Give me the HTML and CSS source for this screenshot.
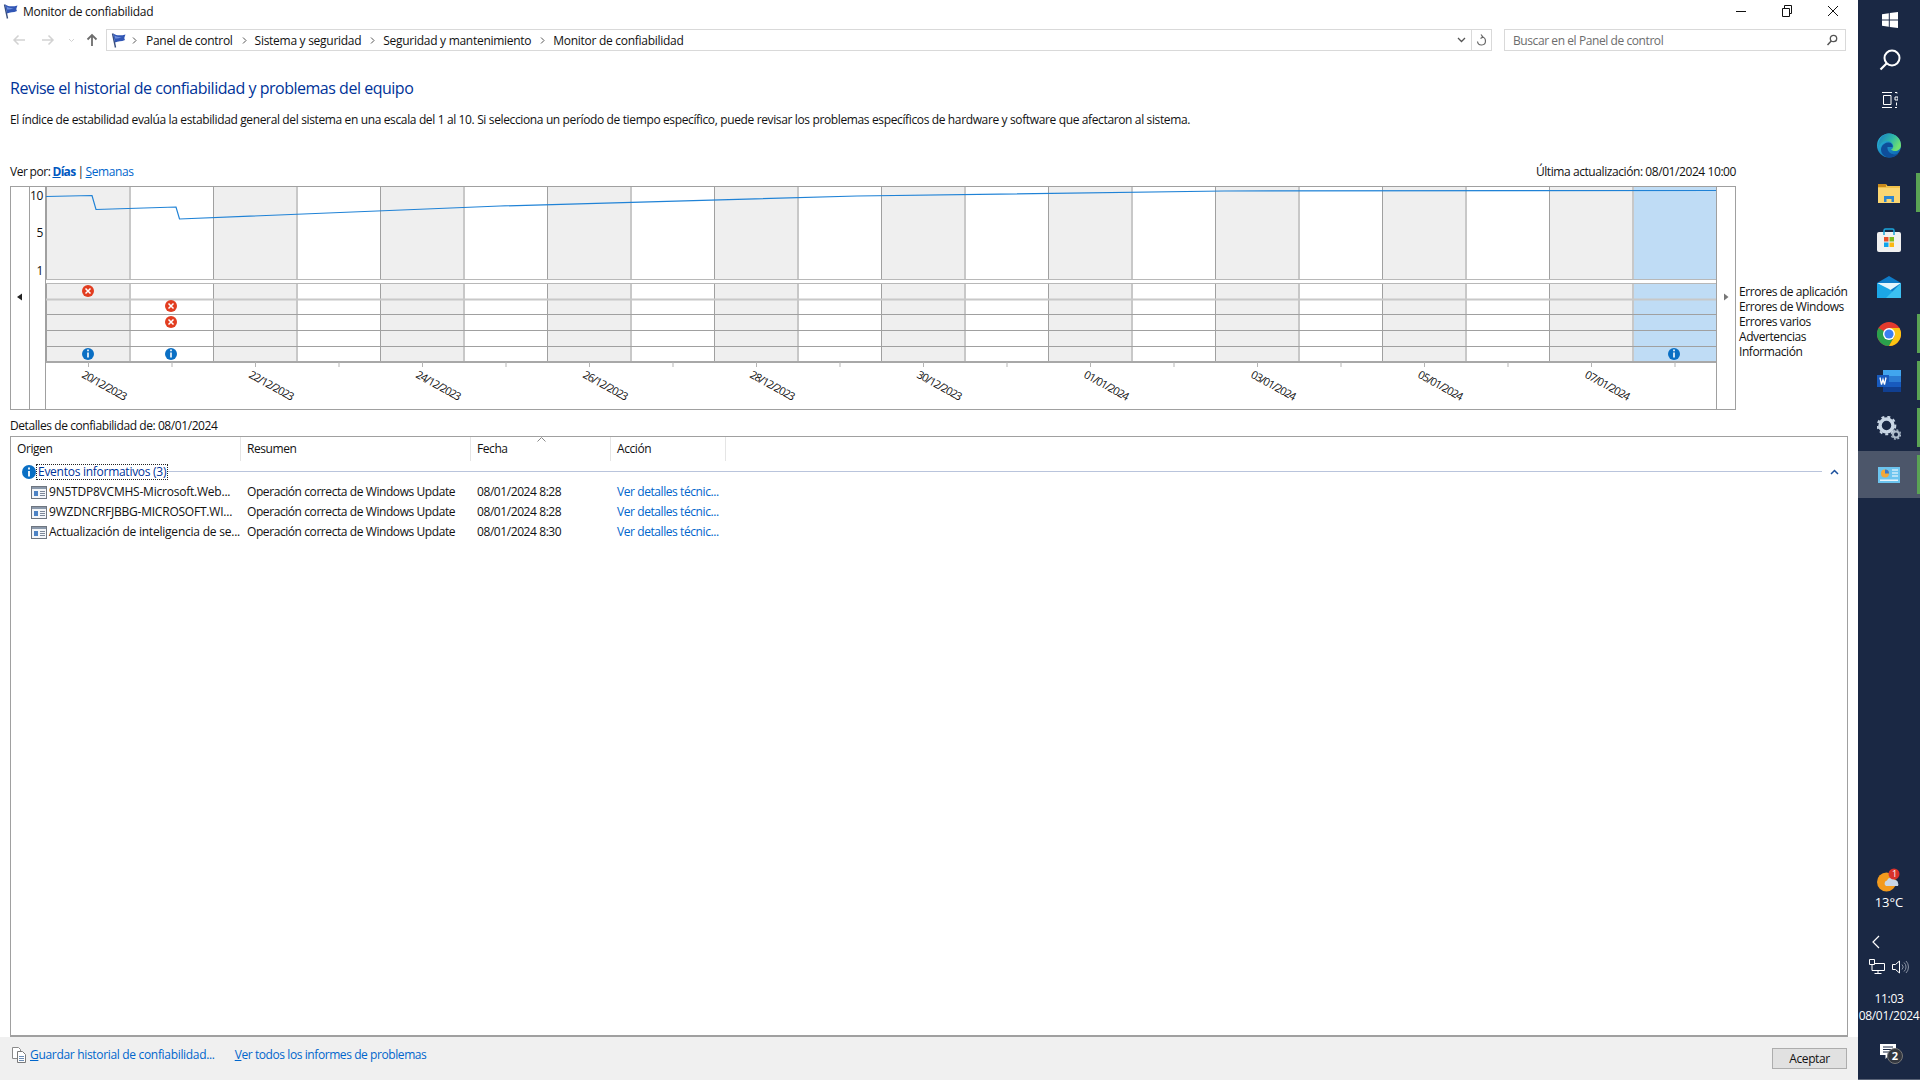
FILE: index.html
```html
<!DOCTYPE html>
<html lang="es">

<head>
    <meta charset="UTF-8">
    <title>Monitor de confiabilidad</title>
    <link rel="stylesheet" href="styles.css">
</head>

<body>
    <div class="window">
        <div class="titlebar">
            <svg class="flag" viewBox="0 0 16 16"><path d="M2.500 1.500L5.500 15.500" stroke="#3a4f7d" stroke-width="1.400" fill="none"/><path d="M3 1.500C6.500 3.500 10 4 15.500 2.500C14.500 5 13.800 6 15 8C11.500 10 8 8.800 5 10.500z" fill="#3156b5"/><path d="M4.500 3.500C7 5 9.500 5.500 12 5C10 6.500 7.500 6.500 5 6.500z" fill="#6f8fdc"/></svg>
            <span class="title-text">Monitor de confiabilidad</span>
            <div class="win-btns">
                <div class="win-btn"><svg width="12" height="12" viewBox="0 0 12 12"><path d="M1 6.500h10" stroke="#111" fill="none"/></svg></div>
                <div class="win-btn"><svg width="12" height="12" viewBox="0 0 12 12"><path d="M1.500 3.500h7v8h-7zM3.500 3.500v-3h7v8h-2" stroke="#111" fill="none"/></svg></div>
                <div class="win-btn"><svg width="12" height="12" viewBox="0 0 12 12"><path d="M1 1l10 10M11 1L1 11" stroke="#111" fill="none"/></svg></div>
            </div>
        </div>

        <div class="navbar">
            <div class="nav-arrows">
                <svg width="14" height="12" viewBox="0 0 14 12"><path d="M13 6H2M6.500 1.500L2 6l4.500 4.500" stroke="#d2d2d2" stroke-width="1.500" fill="none"/></svg>
                <svg class="nav-fwd" width="14" height="12" viewBox="0 0 14 12"><path d="M1 6h11M7.500 1.500L12 6l-4.500 4.500" stroke="#d2d2d2" stroke-width="1.500" fill="none"/></svg>
                <svg width="7" height="5" viewBox="0 0 7 5"><path d="M1 1l2.500 2.500L6 1" stroke="#d2d2d2" fill="none"/></svg>
                <svg class="nav-up" width="12" height="14" viewBox="0 0 12 14"><path d="M6 13V2M1.500 6.500L6 2l4.500 4.500" stroke="#6d6d6d" stroke-width="1.800" fill="none"/></svg>
            </div>
            <div class="address">
                <svg class="flag" viewBox="0 0 16 16"><path d="M2.500 1.500L5.500 15.500" stroke="#3a4f7d" stroke-width="1.400" fill="none"/><path d="M3 1.500C6.500 3.500 10 4 15.500 2.500C14.500 5 13.800 6 15 8C11.500 10 8 8.800 5 10.500z" fill="#3156b5"/><path d="M4.500 3.500C7 5 9.500 5.500 12 5C10 6.500 7.500 6.500 5 6.500z" fill="#6f8fdc"/></svg>
                <svg class="crumb-sep first-sep" viewBox="0 0 5 7"><path d="M1 .5l3 3-3 3" stroke="#555" fill="none"/></svg>
                <span>Panel de control</span>
                <svg class="crumb-sep" viewBox="0 0 5 7"><path d="M1 .5l3 3-3 3" stroke="#555" fill="none"/></svg>
                <span>Sistema y seguridad</span>
                <svg class="crumb-sep" viewBox="0 0 5 7"><path d="M1 .5l3 3-3 3" stroke="#555" fill="none"/></svg>
                <span>Seguridad y mantenimiento</span>
                <svg class="crumb-sep" viewBox="0 0 5 7"><path d="M1 .5l3 3-3 3" stroke="#555" fill="none"/></svg>
                <span>Monitor de confiabilidad</span>
                <div class="addr-end">
                    <svg width="9" height="6" viewBox="0 0 9 6"><path d="M1 1l3.500 3.500L8 1" stroke="#555" stroke-width="1.300" fill="none"/></svg>
                    <div class="refresh">
                        <svg width="11" height="13" viewBox="0 0 11 13"><path d="M5.500 3A4 4 0 1 1 1.500 7.500M5 .5l2 2.500-2.500 1.500" stroke="#666" stroke-width="1.200" fill="none"/></svg>
                    </div>
                </div>
            </div>
            <div class="search">
                <span>Buscar en el Panel de control</span>
                <svg width="12" height="12" viewBox="0 0 12 12"><circle cx="7.500" cy="4.500" r="3.200" stroke="#555" stroke-width="1.300" fill="none"/><path d="M5.200 7L1.500 11" stroke="#555" stroke-width="1.500"/></svg>
            </div>
        </div>

        <h1 class="heading">Revise el historial de confiabilidad y problemas del equipo</h1>
        <p class="intro">El índice de estabilidad evalúa la estabilidad general del sistema en una escala del 1 al 10. Si selecciona un período de tiempo específico, puede revisar los problemas específicos de hardware y software que afectaron al sistema.</p>

        <div class="view-row">
            <div class="view-by">Ver por: <a class="link strong"><u>D</u>ías</a> | <a class="link"><u>S</u>emanas</a></div>
            <div>Última actualización: 08/01/2024 10:00</div>
        </div>

        <div class="chart-row">
            <svg class="chart" width="1726" height="224" viewBox="10 186 1726 224">
                <defs>
                    <pattern id="days" patternUnits="userSpaceOnUse" x="46" y="0" width="167" height="400">
                        <rect x="0" y="0" width="84" height="400" fill="#efefef"/>
                        <rect x="83" y="0" width="2" height="400" fill="#c8c8c8"/>
                        <rect x="0" y="0" width="1" height="400" fill="#a0a0a0"/>
                    </pattern>
                    <pattern id="ticks" patternUnits="userSpaceOnUse" x="88" y="0" width="83.500" height="400">
                        <rect x="0" y="0" width="1" height="400" fill="#b4b4b4"/>
                    </pattern>
                </defs>
                <rect x="46" y="187" width="1670" height="92" fill="url(#days)"/>
                <rect x="46" y="283" width="1670" height="79" fill="url(#days)"/>
                <rect x="1634" y="187" width="82" height="92" fill="#bfdcf5"/>
                <rect x="1634" y="283" width="82" height="79" fill="#bfdcf5"/>

                <path d="M46 279.500H1716M46 283.500H1716" stroke="#b8b8b8" fill="none"/>
                <path d="M46 299.500H1716" stroke="#c8c8c8" stroke-width="2" fill="none"/>
                <path d="M46 314.500H1716M46 330.500H1716M46 346.500H1716" stroke="#a0a0a0" fill="none"/>
                <path d="M46 362H1716" stroke="#a8a8a8" stroke-width="2" fill="none"/>
                <rect x="88" y="362" width="1588" height="5" fill="url(#ticks)"/>

                <rect x="10.500" y="186.500" width="1725" height="223" fill="none" stroke="#a0a0a0"/>
                <path d="M29.500 186V410M45.500 186V410M1716.500 186V410" stroke="#a0a0a0" fill="none"/>

                <polyline class="stability" points="46,196.500 92,195.500 96,209.500 176,207 179.500,219 500,206 857,196 1224,191 1716,190.500"/>

                <text class="axis" x="43" y="200">10</text>
                <text class="axis" x="43" y="237">5</text>
                <text class="axis" x="43" y="275">1</text>

                <path d="M17 297l5-3.500v7z" fill="#222"/>
                <path d="M1724 293.500l4.500 3.500-4.500 3.500z" fill="#777"/>

                <g class="err"><circle cx="88" cy="291" r="6"/><path d="M85.500 288.500l5 5M90.500 288.500l-5 5"/></g>
                <g class="err"><circle cx="171" cy="306" r="6"/><path d="M168.500 303.500l5 5M173.500 303.500l-5 5"/></g>
                <g class="err"><circle cx="171" cy="322" r="6"/><path d="M168.500 319.500l5 5M173.500 319.500l-5 5"/></g>
                <g class="inf"><circle cx="88" cy="354" r="6"/><path d="M88 352.500v5M88 349.500v1.800"/></g>
                <g class="inf"><circle cx="171" cy="354" r="6"/><path d="M171 352.500v5M171 349.500v1.800"/></g>
                <g class="inf"><circle cx="1674" cy="354" r="6"/><path d="M1674 352.500v5M1674 349.500v1.800"/></g>

                <text class="date" transform="translate(81 377) rotate(29)">20/12/2023</text>
                <text class="date" transform="translate(248 377) rotate(29)">22/12/2023</text>
                <text class="date" transform="translate(415 377) rotate(29)">24/12/2023</text>
                <text class="date" transform="translate(582 377) rotate(29)">26/12/2023</text>
                <text class="date" transform="translate(749 377) rotate(29)">28/12/2023</text>
                <text class="date" transform="translate(916 377) rotate(29)">30/12/2023</text>
                <text class="date" transform="translate(1083 377) rotate(29)">01/01/2024</text>
                <text class="date" transform="translate(1250 377) rotate(29)">03/01/2024</text>
                <text class="date" transform="translate(1417 377) rotate(29)">05/01/2024</text>
                <text class="date" transform="translate(1584 377) rotate(29)">07/01/2024</text>
            </svg>
            <div class="legend">
                <div>Errores de aplicación</div>
                <div>Errores de Windows</div>
                <div>Errores varios</div>
                <div>Advertencias</div>
                <div>Información</div>
            </div>
        </div>

        <div class="details-label">Detalles de confiabilidad de: 08/01/2024</div>

        <div class="details">
            <div class="table-head">
                <div class="th">Origen</div>
                <div class="th">Resumen</div>
                <div class="th">Fecha</div>
                <div class="th">Acción</div>
                <svg class="sort-caret" width="9" height="5" viewBox="0 0 9 5"><path d="M.5 4.500l4-4 4 4" stroke="#888" fill="none"/></svg>
            </div>
            <div class="group">
                <svg width="14" height="14" viewBox="0 0 14 14"><circle cx="7" cy="7" r="7" fill="#0a6fc4"/><path d="M7 6v5.500M7 2.500v2" stroke="#fff" stroke-width="1.800"/></svg>
                <span class="group-name">Eventos informativos (3)</span>
                <div class="group-line"></div>
                <svg class="group-chev" width="9" height="6" viewBox="0 0 9 6"><path d="M1 5l3.500-3.500L8 5" stroke="#1a4f9c" stroke-width="1.500" fill="none"/></svg>
            </div>
            <div class="row">
                <div class="cell source"><svg class="row-icon" viewBox="0 0 16 13"><rect x=".5" y=".5" width="15" height="12" fill="#f4f6f9" stroke="#6f7680"/><rect x="1" y="1" width="14" height="2" fill="#8b99ab"/><rect x="3" y="5" width="4" height="5" fill="#4d83c4"/><path d="M9 5.500h5M9 7.500h5M9 9.500h5" stroke="#7c8899"/></svg>9N5TDP8VCMHS-Microsoft.Web...</div>
                <div class="cell">Operación correcta de Windows Update</div>
                <div class="cell">08/01/2024 8:28</div>
                <div class="cell"><a class="link">Ver detalles técnic...</a></div>
            </div>
            <div class="row">
                <div class="cell source"><svg class="row-icon" viewBox="0 0 16 13"><rect x=".5" y=".5" width="15" height="12" fill="#f4f6f9" stroke="#6f7680"/><rect x="1" y="1" width="14" height="2" fill="#8b99ab"/><rect x="3" y="5" width="4" height="5" fill="#4d83c4"/><path d="M9 5.500h5M9 7.500h5M9 9.500h5" stroke="#7c8899"/></svg>9WZDNCRFJBBG-MICROSOFT.WI...</div>
                <div class="cell">Operación correcta de Windows Update</div>
                <div class="cell">08/01/2024 8:28</div>
                <div class="cell"><a class="link">Ver detalles técnic...</a></div>
            </div>
            <div class="row">
                <div class="cell source"><svg class="row-icon" viewBox="0 0 16 13"><rect x=".5" y=".5" width="15" height="12" fill="#f4f6f9" stroke="#6f7680"/><rect x="1" y="1" width="14" height="2" fill="#8b99ab"/><rect x="3" y="5" width="4" height="5" fill="#4d83c4"/><path d="M9 5.500h5M9 7.500h5M9 9.500h5" stroke="#7c8899"/></svg>Actualización de inteligencia de se...</div>
                <div class="cell">Operación correcta de Windows Update</div>
                <div class="cell">08/01/2024 8:30</div>
                <div class="cell"><a class="link">Ver detalles técnic...</a></div>
            </div>
        </div>

        <div class="footer">
            <svg class="save-icon" width="14" height="16" viewBox="0 0 14 16"><path d="M.5.500h6l2 2v9h-8z" fill="#fff" stroke="#8a8a8a"/><path d="M5.500 4.500h5l3 3v8h-8z" fill="#fff" stroke="#7a7a7a"/><path d="M7 9.500h5M7 11.500h5M7 13.500h5" stroke="#6d8db5"/></svg>
            <a class="link save-link"><u>G</u>uardar historial de confiabilidad...</a>
            <a class="link second"><u>V</u>er todos los informes de problemas</a>
            <button class="ok-btn">Aceptar</button>
        </div>
    </div>

    <div class="taskbar">
        <div class="tb-sys">
            <svg width="18" height="18" viewBox="0 0 18 18"><path d="M1 3.300l6.800-1v6.200H1zM8.800 2.100L17 1v7.500H8.800zM1 9.500h6.800v6.200l-6.800-1zM8.800 9.500H17V17l-8.200-1.100z" fill="#fff"/></svg>
        </div>
        <div class="tb-sys">
            <svg width="22" height="22" viewBox="0 0 22 22"><circle cx="13" cy="9" r="7.500" stroke="#fff" stroke-width="2" fill="none"/><path d="M7.500 14.500L1.500 20.500" stroke="#fff" stroke-width="2.200"/></svg>
        </div>
        <div class="tb-sys tb-sys-last">
            <svg width="16" height="16" viewBox="0 0 16 16"><path d="M0 .5h10M0 15.500h10M1.500 3.500h7.500v9H1.500zM13 .5h2v1M13 15.500h2M13 5h3v3h-3zM14.500 10.500v3" stroke="#fff" fill="none"/></svg>
        </div>

        <div class="tb-app">
            <svg width="24" height="25" viewBox="0 0 24 25">
                <defs>
                    <linearGradient id="edgeBlue" x1="0" y1="0" x2=".8" y2="1"><stop offset="0" stop-color="#2fc4dc"/><stop offset="1" stop-color="#0c64b4"/></linearGradient>
                    <linearGradient id="edgeGreen" x1="0" y1="0" x2="1" y2=".5"><stop offset="0" stop-color="#1878c8"/><stop offset=".6" stop-color="#2eb8a8"/><stop offset="1" stop-color="#70e070"/></linearGradient>
                </defs>
                <circle cx="12" cy="12.500" r="12" fill="url(#edgeBlue)"/>
                <path d="M9.500 24C5 22 3 18 4.500 14 6 10.500 9.500 9 12 9.500c3 .5 4 3 3.500 4.500H10.500c-.5 4 2.500 7 6.500 7.500 1.500.2 3-.2 4.500-1-3 3.500-7.500 4.700-12 3.500z" fill="#0e4e9a"/>
                <path d="M12 .5a12 12 0 0 1 12 12c0 3.500-3 5.500-6 5.500-2 0-3.500-.7-4-1.500 2-.8 2.700-2.800 2-4.800C15 9 12 7.500 9 8c-3.500.6-6.500 3-7.500 7C.3 7 5.500 .5 12 .5z" fill="url(#edgeGreen)"/>
            </svg>
        </div>
        <div class="tb-app running-wide">
            <svg width="22" height="20" viewBox="0 0 22 20"><path d="M0 1h8l1.500 2H22v17H0z" fill="#f2c24a"/><rect x="0" y="1" width="8" height="3" fill="#c98a1c"/><rect x="0" y="5" width="22" height="15" fill="#fbd672"/><path d="M6 19v-6h10v6h-2.500v-3h-5v3z" fill="#2f86cf"/></svg>
        </div>
        <div class="tb-app">
            <svg width="24" height="24" viewBox="0 0 24 24"><rect x="0" y="4" width="24" height="20" rx="2" fill="#f1f1f1"/><path d="M7 7V2.500a1.500 1.500 0 0 1 1.500-1.500h7A1.500 1.500 0 0 1 17 2.500V7" stroke="#1ba6dc" stroke-width="1.500" fill="none"/><rect x="7" y="9" width="4.500" height="4.500" fill="#e8502a"/><rect x="12.500" y="9" width="4.500" height="4.500" fill="#7fba1f"/><rect x="7" y="14.500" width="4.500" height="4.500" fill="#10a4ec"/><rect x="12.500" y="14.500" width="4.500" height="4.500" fill="#fbb811"/></svg>
        </div>
        <div class="tb-app">
            <svg width="24" height="22" viewBox="0 0 24 22"><path d="M0 7L12 0l12 7v15H0z" fill="#0f7cc9"/><path d="M0 7h24L12 15z" fill="#e6f5fc"/><path d="M0 7v15h24L12 13z" fill="#1ba6e6"/><path d="M24 7v15H9z" fill="#3cc0f0"/></svg>
        </div>
        <div class="tb-app running">
            <svg width="24" height="24" viewBox="0 0 24 24"><circle cx="12" cy="12" r="12" fill="#e33b2e"/><path d="M12 12L1.600 6A12 12 0 0 0 12 24l6-10.400z" fill="#2aa14c"/><path d="M12 6h10.400A12 12 0 0 1 12 24l6-10.400z" fill="#fbc512"/><circle cx="12" cy="12" r="6" fill="#fff"/><circle cx="12" cy="12" r="4.600" fill="#3a7ff0"/></svg>
        </div>
        <div class="tb-app running">
            <svg width="24" height="22" viewBox="0 0 24 22"><rect x="6" y="0" width="18" height="22" rx="1" fill="#2b7cd3"/><rect x="6" y="0" width="18" height="6" fill="#41a5ee"/><rect x="6" y="12" width="18" height="5" fill="#185abd"/><rect x="6" y="17" width="18" height="5" fill="#103f91"/><rect x="0" y="5" width="12" height="12" fill="#185abd"/><path d="M2 7.500l1.500 7 1.500-5 1.500 5 1.500-7" stroke="#fff" stroke-width="1.300" fill="none" transform="translate(1 0)"/></svg>
        </div>
        <div class="tb-app running">
            <svg width="24" height="24" viewBox="0 0 24 24"><circle cx="9.500" cy="9.500" r="6.500" fill="none" stroke="#c9d6e4" stroke-width="3.500"/><circle cx="9.500" cy="9.500" r="8.800" fill="none" stroke="#c9d6e4" stroke-width="2" stroke-dasharray="3 3"/><circle cx="19" cy="18.500" r="3" fill="none" stroke="#aebccb" stroke-width="2"/><circle cx="19" cy="18.500" r="4.600" fill="none" stroke="#aebccb" stroke-width="1.300" stroke-dasharray="2 1.600"/></svg>
        </div>
        <div class="tb-app running active">
            <svg width="22" height="16" viewBox="0 0 22 16"><rect width="22" height="16" fill="#6cc4ef"/><circle cx="7" cy="6.500" r="4" fill="#f2a83a"/><path d="M7 6.500V2.500a4 4 0 0 1 4 4z" fill="#3a78c9"/><path d="M14 3h6M14 6h6M14 9h6" stroke="#fff"/><rect x="2" y="12.500" width="18" height="1.500" fill="#e8f6fd"/></svg>
        </div>

        <div class="tray">
            <div class="weather">
                <svg width="24" height="26" viewBox="0 0 24 26"><circle cx="9.500" cy="14" r="9.500" fill="#f39a1d"/><path d="M9 18a3 3 0 0 1 1-5.500 4 4 0 0 1 7.500-.5 3 3 0 0 1 3.500 3 3 3 0 0 1 0 3z" fill="#c9d6e6"/><circle cx="17" cy="6" r="5.500" fill="#d8322b"/></svg>
                <span class="badge-one">1</span>
            </div>
            <div class="temp">13°C</div>
            <svg class="tray-chev" width="9" height="14" viewBox="0 0 9 14"><path d="M8 1L2 7l6 6" stroke="#fff" stroke-width="1.200" fill="none"/></svg>
            <div class="tray-icons">
                <svg width="16" height="15" viewBox="0 0 16 15"><path d="M3 4.500h12.500v7H3zM9 11.500v3M5.500 14.500h7" stroke="#fff" fill="none"/><path d="M.5.500h5v5h-5z" fill="#1a2844" stroke="#fff"/></svg>
                <svg width="17" height="14" viewBox="0 0 17 14"><path d="M.5 4.500h3L7.500 1v12l-4-3.500h-3z" stroke="#fff" fill="none"/><path d="M10 4.500a3.500 3.500 0 0 1 0 5M12 2.500a6 6 0 0 1 0 9M14 1a8.500 8.500 0 0 1 0 12" stroke="#8b94a5" fill="none"/></svg>
            </div>
            <div class="clock">11:03</div>
            <div class="clock">08/01/2024</div>
            <div class="notify">
                <svg width="18" height="16" viewBox="0 0 18 16"><path d="M0 0h16v11H9l-3.500 4v-4H0z" fill="#fff"/><path d="M3 3h10M3 5.500h10M3 8h7" stroke="#1a2844"/></svg>
                <span class="badge-two">2</span>
            </div>
        </div>
    </div>
</body>

</html>
```

FILE: styles.css
```css
* {
    box-sizing: border-box;
}

html, body {
    margin: 0;
    height: 100%;
}

body {
    display: flex;
    width: 1920px;
    height: 1080px;
    overflow: hidden;
    background-color: white;
    font-family: "Open Sans", "Noto Sans", sans-serif;
    font-size: 12px;
    letter-spacing: -0.42px;
    color: #111;
}

.window {
    width: 1858px;
    display: flex;
    flex-direction: column;
}

.link {
    color: #0066cc;
}

.strong {
    font-weight: bold;
    color: #0058c0;
    letter-spacing: -0.7px;
}

.flag {
    width: 16px;
    height: 16px;
    flex: none;
}

/* title bar */
.titlebar {
    height: 22px;
    display: flex;
    align-items: center;
    padding-left: 2px;
}

.title-text {
    margin-left: 5px;
    letter-spacing: -0.28px;
}

.win-btns {
    margin-left: auto;
    margin-right: 2px;
    display: flex;
}

.win-btn {
    width: 46px;
    height: 20px;
    display: flex;
    align-items: center;
    justify-content: center;
}

/* address row */
.navbar {
    margin-top: 7px;
    height: 22px;
    display: flex;
}

.nav-arrows {
    width: 106px;
    display: flex;
    align-items: center;
    gap: 13px;
    padding-left: 12px;
}

.nav-fwd {
    margin-left: 2px;
}

.nav-up {
    margin-left: -2px;
}

.address {
    width: 1386px;
    border: 1px solid #d9d9d9;
    display: flex;
    align-items: center;
    padding-left: 3px;
    letter-spacing: -0.28px;
}

.crumb-sep {
    width: 5px;
    height: 7px;
    margin: 0 8px 0 9px;
    flex: none;
}

.first-sep {
    margin: 0 9px 0 6px;
}

.addr-end {
    margin-left: auto;
    height: 100%;
    display: flex;
    align-items: center;
}

.refresh {
    margin-left: 5px;
    width: 20px;
    height: 100%;
    border-left: 1px solid #d9d9d9;
    display: flex;
    align-items: center;
    justify-content: center;
}

.search {
    margin-left: 12px;
    width: 342px;
    border: 1px solid #d9d9d9;
    display: flex;
    align-items: center;
    justify-content: space-between;
    padding: 0 7px 0 8px;
    color: #6d6d6d;
}

/* top text */
.heading {
    margin: 26px 0 0 10px;
    font-size: 16px;
    line-height: 22px;
    font-weight: normal;
    letter-spacing: -0.48px;
    color: #003399;
}

.intro {
    margin: 13px 0 0 10px;
    line-height: 16px;
    letter-spacing: -0.365px;
}

.view-row {
    margin: 36px 122px 0 10px;
    line-height: 16px;
    display: flex;
    justify-content: space-between;
}

.view-by {
    word-spacing: -0.7px;
}

/* chart */
.chart-row {
    margin: 6px 0 0 10px;
    display: flex;
    height: 224px;
}

.stability {
    fill: none;
    stroke: #1f82d6;
    stroke-width: 1.200;
}

.axis {
    text-anchor: end;
    font-size: 12px;
    fill: #111;
}

.date {
    font-size: 11px;
    letter-spacing: -0.95px;
    fill: #111;
}

.err circle {
    fill: #e23d20;
}

.err path {
    stroke: white;
    stroke-width: 1.500;
    fill: none;
}

.inf circle {
    fill: #0a6fc4;
}

.inf path {
    stroke: white;
    stroke-width: 1.600;
    fill: none;
}

.legend {
    margin-left: 3px;
    padding-top: 98px;
    line-height: 15px;
    white-space: nowrap;
}

/* details table */
.details-label {
    margin: 8px 0 0 10px;
    line-height: 16px;
}

.details {
    margin: 2px 10px 0 10px;
    flex: 1;
    border: 1px solid #a0a0a0;
    border-bottom-width: 2px;
    position: relative;
}

.table-head {
    display: grid;
    grid-template-columns: 230px 230px 140px 115px;
    height: 24px;
}

.th {
    border-right: 1px solid #e5e5e5;
    padding-left: 6px;
    line-height: 24px;
}

.sort-caret {
    position: absolute;
    left: 526px;
    top: 0;
}

.group {
    height: 21px;
    display: flex;
    align-items: center;
    padding-left: 11px;
}

.group-name {
    margin-left: 1px;
    padding: 0 1px;
    line-height: 14px;
    color: #003399;
    outline: 1px dotted #222;
    letter-spacing: -0.27px;
}

.group-line {
    flex: 1;
    height: 1px;
    margin: 0 8px 0 1px;
    background-color: #b9c4dc;
}

.group-chev {
    margin-right: 8px;
}

.row {
    display: grid;
    grid-template-columns: 230px 230px 140px 115px;
    height: 20px;
    line-height: 20px;
}

.cell {
    padding-left: 6px;
    white-space: nowrap;
    overflow: hidden;
}

.source {
    padding-left: 20px;
    display: flex;
    align-items: center;
    gap: 2px;
    letter-spacing: -0.22px;
}

.row-icon {
    width: 16px;
    height: 13px;
    flex: none;
}

/* footer */
.footer {
    height: 43px;
    background-color: #f0f0f0;
    display: flex;
    align-items: flex-start;
    padding: 10px 11px 0 12px;
    line-height: 16px;
}

.save-icon {
    margin-right: 4px;
}

.save-link {
    letter-spacing: -0.32px;
}

.second {
    margin-left: 20px;
}

.ok-btn {
    margin: 1px 0 0 auto;
    width: 75px;
    height: 21px;
    background-color: #e1e1e1;
    border: 1px solid #adadad;
    font-family: inherit;
    font-size: 12px;
    letter-spacing: inherit;
    color: #111;
}

/* taskbar */
.taskbar {
    width: 62px;
    height: 1080px;
    background-color: #1a2844;
    display: flex;
    flex-direction: column;
    align-items: stretch;
    color: white;
    letter-spacing: 0;
}

.tb-sys {
    height: 40px;
    flex: none;
    display: flex;
    align-items: center;
    justify-content: center;
    padding-left: 1px;
}

.tb-sys-last {
    height: 42px;
    padding-bottom: 2px;
}

.tb-app {
    height: 47px;
    flex: none;
    display: flex;
    align-items: center;
    justify-content: center;
    position: relative;
}

.running::after,
.running-wide::after {
    content: "";
    position: absolute;
    right: 0;
    top: 4px;
    bottom: 4px;
    width: 3px;
    background-color: #5aa354;
}

.running-wide::after {
    width: 4px;
}

.active {
    background-color: #4c566a;
}

.tray {
    margin-top: auto;
    display: flex;
    flex-direction: column;
    align-items: center;
    border-bottom: 1px solid #5a6478;
    height: 215px;
}

.weather {
    position: relative;
    width: 24px;
    height: 26px;
    margin-top: 3px;
}

.badge-one {
    position: absolute;
    right: 1px;
    top: 0;
    font-size: 9px;
    line-height: 12px;
    width: 11px;
    text-align: center;
}

.temp {
    font-size: 13px;
    line-height: 18px;
    margin-top: -1px;
}

.tray-chev {
    margin: 24px 27px 0 0;
}

.tray-icons {
    margin-top: 10px;
    display: flex;
    gap: 7px;
    align-items: center;
}

.clock {
    font-size: 12px;
    line-height: 17px;
    letter-spacing: -0.3px;
}

.tray-icons + .clock {
    margin-top: 16px;
}

.notify {
    position: relative;
    margin-top: 20px;
    height: 20px;
}

.badge-two {
    position: absolute;
    left: 7px;
    top: 4px;
    width: 16px;
    height: 16px;
    line-height: 14px;
    text-align: center;
    font-size: 11px;
    font-weight: bold;
    border-radius: 50%;
    background-color: #33373f;
    border: 1px solid #777;
}
```
